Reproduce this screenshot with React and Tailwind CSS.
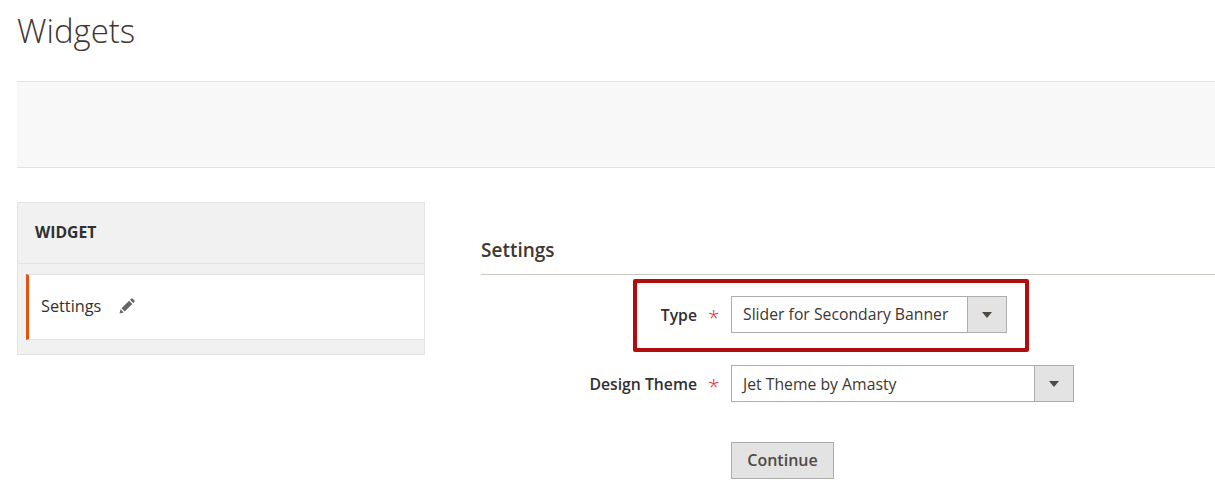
import React from 'react';

function Select({ value, width, textClass }) {
  return (
    <div className={`flex h-[37px] border border-[#adadad] bg-white ${width}`}>
      <div className={`flex-1 pl-[11px] text-[15.75px] text-[#41362f] ${textClass}`}>{value}</div>
      <div className="flex w-[39px] items-center justify-center border-l border-[#adadad] bg-[#e3e3e3]">
        <div className="h-0 w-0 border-x-[5px] border-t-[6px] border-x-transparent border-t-[#514943]" />
      </div>
    </div>
  );
}

function FieldRow({ label, children }) {
  return (
    <div className="flex h-[37px] items-center">
      <label className="w-[216px] pt-[2px] text-right text-[15.75px] font-semibold text-[#303030]">{label}</label>
      <span className="w-[34px] pt-[6px] pl-[11px] text-[21px] leading-none font-light text-[#e22626]">*</span>
      {children}
    </div>
  );
}

export default function App() {
  return (
    <div className="h-[502px] overflow-hidden bg-white pl-[17px] font-['Open_Sans',sans-serif]">
      <h1 className="h-[81px] pt-[8px] text-[33px] leading-[46px] font-light text-[#41362f]">Widgets</h1>
      <div className="h-[87px] border-y border-[#e3e3e3] bg-[#f8f8f8]" />

      <div className="mt-[34px] flex">
        <aside className="h-[153px] w-[408px] border border-[#e3e3e3] bg-[#f1f1f1]">
          <div className="h-[61px] border-b border-[#e3e3e3] pl-[17px] text-[15.75px] leading-[58px] font-bold text-[#303030]">WIDGET</div>
          <div className="mt-[10px] ml-[8px] flex h-[66px] items-center border-y border-[#e3e3e3] border-l-[3px] border-l-[#e0530f] bg-white pb-[2px] pl-[12px]">
            <span className="text-[16.3px] text-[#303030]">Settings</span>
            <svg className="ml-[17px]" width="18" height="18" viewBox="0 0 18 18" fill="#666">
              <path d="M1.5 16.5l1-4.2 3.2 3.2zM3.5 11.3l7.6-7.6 3.2 3.2-7.6 7.6zM12 2.8l1.3-1.3a.8.8 0 0 1 1.1 0l2.1 2.1a.8.8 0 0 1 0 1.1L15.2 6z" />
            </svg>
          </div>
        </aside>

        <main className="relative ml-[56px] flex-1">
          <h2 className="h-[73px] border-b border-[#c8c8c0] pt-[34px] text-[19px] leading-[28px] font-semibold text-[#41362f]">Settings</h2>
          <div className="mt-[21px] flex flex-col gap-[32px]">
            <FieldRow label="Type"><Select value="Slider for Secondary Banner" width="w-[276px]" textClass="leading-[34px]" /></FieldRow>
            <FieldRow label="Design Theme"><Select value="Jet Theme by Amasty" width="w-[343px]" textClass="leading-[36px]" /></FieldRow>
          </div>
          <button className="mt-[40px] ml-[250px] h-[37px] w-[103px] border border-[#adadad] bg-[#e3e3e3] pb-[2px] text-[16px] font-semibold text-[#514943]">Continue</button>
          {/* red annotation drawn over the form */}
          <div className="absolute top-[77px] left-[152px] h-[73px] w-[396px] rounded-[2px] border-[4px] border-[#b30c0c]" />
        </main>
      </div>
    </div>
  );
}
